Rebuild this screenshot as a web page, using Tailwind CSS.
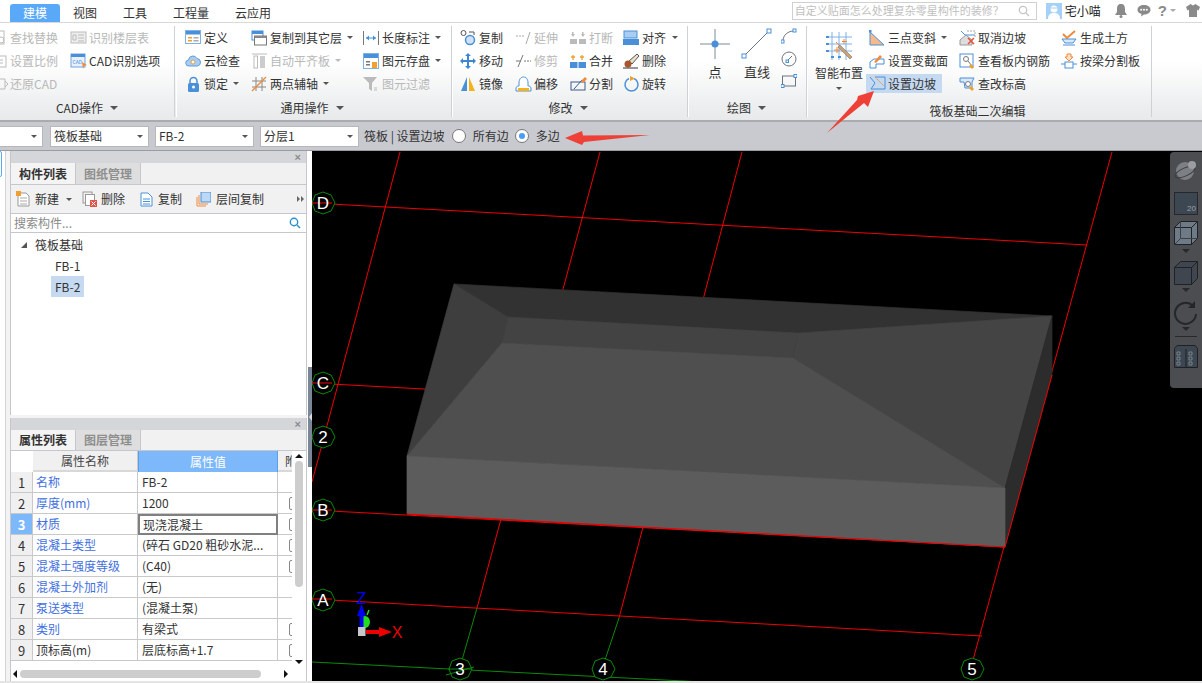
<!DOCTYPE html>
<html lang="zh">
<head>
  <meta charset="UTF-8" />
  <title>筏板基础</title>
  <script src="https://cdn.jsdelivr.net/npm/@tailwindcss/browser@4"></script>
</head>
<body class="bg-white">
<div class="relative w-[1202px] h-[683px] overflow-hidden flex flex-col bg-white text-[12px] leading-none text-[#333] [font-family:'Noto_Sans_CJK_SC','Liberation_Sans',sans-serif]">

  <!-- Tabs row -->
  <header class="h-[23px] flex items-end border-b border-[#d9d9d9] shrink-0">
    <div class="ml-[10px] w-[50px] h-[18px] rounded-t-[3px] bg-[#5aa9f8] text-white flex items-center justify-center">建模</div>
    <nav class="flex h-[18px] items-center">
      <span class="ml-[13px] w-[50px]">视图</span>
      <span class="w-[50px]">工具</span>
      <span class="w-[62px]">工程量</span>
      <span>云应用</span>
    </nav>
    <div class="ml-auto flex items-center h-[23px] pr-[2px]">
      <div class="w-[245px] h-[18px] border border-[#d0d0d0] flex items-center pl-[2px] pr-[6px] text-[11px] text-[#c0c0c0]">
        <span>自定义贴面怎么处理复杂零星构件的装修？</span>
        <svg class="ml-auto" width="12" height="12" viewBox="0 0 12 12" fill="none" stroke="#c4c4c4" stroke-width="1.3"><circle cx="5" cy="5" r="3.7"/><path d="M8 8l3 3"/></svg>
      </div>
      <svg class="ml-[9px]" width="16" height="16" viewBox="0 0 16 16"><rect width="16" height="16" fill="#a5d0f8"/><circle cx="8" cy="6" r="3.5" fill="#fff"/><path d="M2 16c0-5 3-6 6-6s6 1 6 6z" fill="#fff"/><path d="M4 5h8" stroke="#a5d0f8"/></svg>
      <span class="ml-[3px] w-[37px] text-[12px] text-[#222]">宅小喵</span>
      <svg class="ml-[12px]" width="14" height="15" viewBox="0 0 14 15" fill="#8a8a8a"><path d="M7 1c3 0 4 2 4 5v3l2 3H1l2-3V6c0-3 1-5 4-5z"/><circle cx="7" cy="13.5" r="1.5"/></svg>
      <svg class="ml-[9px]" width="14" height="13" viewBox="0 0 14 13"><path d="M7 1c3.6 0 6.5 2 6.500 4.700S10.600 10.500 7 10.500l-3 2 .5-2.500C2 9.300.5 7.700.5 5.700.5 3 3.400 1 7 1z" fill="#8a8a8a"/><g fill="#fff"><circle cx="4.200" cy="5.700" r="1"/><circle cx="7" cy="5.700" r="1"/><circle cx="9.800" cy="5.700" r="1"/></g></svg>
      <span class="ml-[7px] text-[15px] font-bold text-[#8a8a8a] [font-family:'Liberation_Sans',sans-serif]">?</span>
      <span class="ml-[3px] w-0 h-0 border-x-[3px] border-x-transparent border-t-[3px] border-t-[#aaa]"></span>
      <svg class="ml-[10px]" width="14" height="13" viewBox="0 0 14 13" fill="#8a8a8a"><path d="M4.500 0l2.500 1.500L9.500 0 14 3l-1.500 3.500-1.500-.7V13H3V5.800l-1.500.7L0 3z"/></svg>
    </div>
  </header>

  <!-- Ribbon -->
  <section class="h-[99px] flex shrink-0 bg-gradient-to-b from-white from-40% to-[#e7e9ea] border-b-2 border-[#a9abae]">

    <!-- CAD -->
    <div class="w-[175px] flex flex-col border-r border-[#cfd2d4] overflow-hidden text-[#b8b8b8] my-[3px] shrink-0">
      <div class="flex h-[75px]">
        <div class="w-[70px] shrink-0 -ml-[9px] mr-[9px]">
          <div class="flex items-center h-[23px] w-[80px]"><svg class="w-[19px] shrink-0" height="16" viewBox="0 0 19 16" fill="none" stroke="#bbb"><rect x="3" y="1" width="10" height="13"/><circle cx="10" cy="10" r="3"/></svg>查找替换</div>
          <div class="flex items-center h-[23px] w-[80px]"><svg class="w-[19px] shrink-0" height="16" viewBox="0 0 19 16" fill="none" stroke="#bbb"><rect x="3" y="3" width="12" height="11"/><path d="M6 7h6M6 10h6"/></svg>设置比例</div>
          <div class="flex items-center h-[23px] w-[80px]"><svg class="w-[19px] shrink-0" height="16" viewBox="0 0 19 16" fill="none" stroke="#bbb"><path d="M3 3h11v10H3M14 5l3 3-3 3"/></svg>还原CAD</div>
        </div>
        <div>
          <div class="flex items-center h-[23px]"><svg class="w-[19px] shrink-0" height="14" viewBox="0 0 19 14" fill="none" stroke="#bbb"><rect x="1" y="1" width="15" height="11" fill="#eee"/><path d="M3 4h3v5H3zM8 4h6M8 7h6M8 10h6"/></svg>识别楼层表</div>
          <div class="flex items-center h-[23px] text-[#333]"><svg class="w-[19px] shrink-0" height="16" viewBox="0 0 19 16"><rect x="1" y="1" width="14" height="13" fill="#e8f1fb" stroke="#6ea3dc"/><rect x="1" y="1" width="14" height="3" fill="#4a90d9"/><text x="2.500" y="11" font-size="5" fill="#4a90d9">CAD</text><path d="M12 9l5 3-3 1-1 3z" fill="#ef8a3a"/></svg>CAD识别选项</div>
        </div>
      </div>
      <div class="flex-1 flex items-center justify-center text-[#333] pb-[2px]">CAD操作<span class="ml-[7px] w-0 h-0 border-x-[4px] border-x-transparent border-t-[4px] border-t-[#555]"></span></div>
    </div>

    <!-- 通用操作 -->
    <div class="w-[276px] flex flex-col border-r border-[#cfd2d4] my-[3px] ml-[1px] border-l border-l-white shrink-0">
      <div class="flex h-[75px] pl-[8px]">
        <div class="w-[66px] shrink-0">
          <div class="flex items-center h-[23px]"><svg class="w-[19px] shrink-0" height="15" viewBox="0 0 19 15"><rect x=".5" y=".5" width="15" height="13" fill="#fff" stroke="#7fb0e5"/><rect x="1" y="1" width="14" height="3.500" fill="#4a90d9"/><path d="M3 7h4v1.500H3zM3 10h4v1.500H3z" fill="#f0a030"/><path d="M8.500 7h5v1.500h-5zM8.500 10h5v1.500h-5z" fill="#aaa"/></svg>定义</div>
          <div class="flex items-center h-[23px]"><svg class="w-[19px] shrink-0" height="14" viewBox="0 0 19 14"><path d="M4 12a3 3 0 0 1-.5-6A4.500 4.500 0 0 1 12 4.500 3.800 3.800 0 0 1 12.500 12z" fill="#a9cdf2" stroke="#5f9bd8"/><circle cx="8" cy="8" r="2" fill="#fff" stroke="#e89a45"/></svg>云检查</div>
          <div class="flex items-center h-[23px]"><svg class="w-[19px] shrink-0" height="16" viewBox="0 0 19 16"><path d="M5 7V5a3.500 3.500 0 0 1 7 0v2" fill="none" stroke="#4a90d9" stroke-width="1.500"/><rect x="3" y="7" width="11" height="9" rx="1.500" fill="#4a90d9"/><circle cx="8.500" cy="11" r="1.500" fill="#fff"/></svg>锁定<span class="ml-[5px] w-0 h-0 border-x-[3px] border-x-transparent border-t-[3px] border-t-[#555]"></span></div>
        </div>
        <div class="w-[112px] shrink-0">
          <div class="flex items-center h-[23px]"><svg class="w-[19px] shrink-0" height="16" viewBox="0 0 19 16"><rect x="1" y="1" width="11" height="9" fill="#fff" stroke="#4a90d9"/><rect x="1" y="1" width="11" height="3" fill="#4a90d9"/><rect x="3.500" y="6" width="12" height="9" fill="#fff" stroke="#777"/><rect x="3.500" y="6" width="12" height="2" fill="#888"/></svg>复制到其它层<span class="ml-[5px] w-0 h-0 border-x-[3px] border-x-transparent border-t-[3px] border-t-[#555]"></span></div>
          <div class="flex items-center h-[23px] text-[#b8b8b8]"><svg class="w-[19px] shrink-0" height="16" viewBox="0 0 19 16"><path d="M1 1h15" stroke="#bbb"/><rect x="3" y="3" width="3.500" height="12" fill="none" stroke="#bbb"/><rect x="9" y="3" width="5" height="12" fill="#ccc"/></svg>自动平齐板<span class="ml-[5px] w-0 h-0 border-x-[3px] border-x-transparent border-t-[3px] border-t-[#bbb]"></span></div>
          <div class="flex items-center h-[23px]"><svg class="w-[19px] shrink-0" height="16" viewBox="0 0 19 16" fill="none"><path d="M5 1v14M11 1v14M1 5h14M1 11h14" stroke="#888"/><path d="M1 15L15 1" stroke="#ef8a3a" stroke-width="1.300"/></svg>两点辅轴<span class="ml-[5px] w-0 h-0 border-x-[3px] border-x-transparent border-t-[3px] border-t-[#555]"></span></div>
        </div>
        <div>
          <div class="flex items-center h-[23px]"><svg class="w-[19px] shrink-0" height="14" viewBox="0 0 19 14" fill="none"><path d="M.5 0v14M15.500 0v14" stroke="#777"/><path d="M3 7h10" stroke="#4a90d9"/><path d="M3 7l3-2.500v5zM13 7l-3-2.500v5z" fill="#4a90d9"/></svg>长度标注<span class="ml-[5px] w-0 h-0 border-x-[3px] border-x-transparent border-t-[3px] border-t-[#555]"></span></div>
          <div class="flex items-center h-[23px]"><svg class="w-[19px] shrink-0" height="16" viewBox="0 0 19 16"><rect x=".5" y=".5" width="15" height="15" fill="#fff" stroke="#7fb0e5"/><rect x="1" y="1" width="14" height="4" fill="#4a90d9"/><rect x="3" y="8" width="4" height="1.500" fill="#777"/><rect x="3" y="11" width="4" height="1.500" fill="#777"/><rect x="9" y="9" width="5" height="6" fill="#f0a030"/></svg>图元存盘<span class="ml-[5px] w-0 h-0 border-x-[3px] border-x-transparent border-t-[3px] border-t-[#555]"></span></div>
          <div class="flex items-center h-[23px] text-[#b8b8b8]"><svg class="w-[19px] shrink-0" height="16" viewBox="0 0 19 16"><path d="M0 1h14L9 7v8L6 13V7z" fill="#bbb"/><path d="M11 12h3M11 14h3" stroke="#bbb"/></svg>图元过滤</div>
        </div>
      </div>
      <div class="flex-1 flex items-center justify-center pb-[2px] pr-[4px]">通用操作<span class="ml-[7px] w-0 h-0 border-x-[4px] border-x-transparent border-t-[4px] border-t-[#555]"></span></div>
    </div>

    <!-- 修改 -->
    <div class="w-[236px] flex flex-col border-r border-[#cfd2d4] my-[3px] border-l border-l-white shrink-0">
      <div class="flex h-[75px] pl-[7px]">
        <div class="w-[55px] shrink-0">
          <div class="flex items-center h-[23px]"><svg class="w-[19px] shrink-0" height="16" viewBox="0 0 19 16" fill="none"><circle cx="3.500" cy="3" r="2.500" stroke="#555"/><circle cx="10" cy="10" r="4.500" fill="#cfe2f6" stroke="#4a90d9" stroke-width="1.500"/><path d="M9 2h5v3" stroke="#555"/></svg>复制</div>
          <div class="flex items-center h-[23px]"><svg class="w-[19px] shrink-0" height="16" viewBox="0 0 19 16" fill="#3f86d2"><path d="M8 0l3 3H9v4h4V5l3 3-3 3V9H9v4h2l-3 3-3-3h2V9H3v2L0 8l3-3v2h4V3H5z"/></svg>移动</div>
          <div class="flex items-center h-[23px]"><svg class="w-[19px] shrink-0" height="16" viewBox="0 0 19 16"><path d="M7 1v14H1z" fill="#4a90d9"/><path d="M9 1v14h6z" fill="#f5b21f"/></svg>镜像</div>
        </div>
        <div class="w-[55px] shrink-0">
          <div class="flex items-center h-[23px] text-[#b8b8b8]"><svg class="w-[19px] shrink-0" height="16" viewBox="0 0 19 16" fill="none" stroke="#aaa"><path d="M1 6h8" stroke-dasharray="2 1"/><path d="M11 14L15 2"/></svg>延伸</div>
          <div class="flex items-center h-[23px] text-[#b8b8b8]"><svg class="w-[19px] shrink-0" height="16" viewBox="0 0 19 16" fill="none" stroke="#777"><path d="M1 8h5"/><path d="M3 14L8 2"/><path d="M9 8h7" stroke-dasharray="2 1"/></svg>修剪</div>
          <div class="flex items-center h-[23px]"><svg class="w-[19px] shrink-0" height="16" viewBox="0 0 19 16"><path d="M1 15v-2C1 10 3 10 4 10V7C4 3 6 1 8.500 1S13 3 13 7v3c1 0 3 0 3 3v2z" fill="#fff" stroke="#4a90d9"/><path d="M3 12h11v3H3z" fill="#f5b21f"/></svg>偏移</div>
        </div>
        <div class="w-[53px] shrink-0">
          <div class="flex items-center h-[23px] text-[#b8b8b8]"><svg class="w-[19px] shrink-0" height="16" viewBox="0 0 19 16" fill="#bbb"><rect x="0" y="9" width="7" height="5"/><rect x="9" y="9" width="7" height="5"/><path d="M2 2h1.500v2H5L3 7 1 4h1zM12 2h1.500v2H15l-2 3-2-3h1z"/></svg>打断</div>
          <div class="flex items-center h-[23px]"><svg class="w-[19px] shrink-0" height="16" viewBox="0 0 19 16"><rect x="0" y="9" width="16" height="6" fill="#4a90d9"/><path d="M8 9v6" stroke="#fff"/><path d="M3 2v5M1 4h4M12 2v5M10 4h4" stroke="#f0a030" stroke-width="1.300"/></svg>合并</div>
          <div class="flex items-center h-[23px]"><svg class="w-[19px] shrink-0" height="16" viewBox="0 0 19 16" fill="none"><rect x="1" y="6" width="14" height="8" stroke="#3c5a8a"/><path d="M4 13l8-9" stroke="#3c5a8a"/><path d="M11 5l4-4 2 2-4 4z" fill="#ef8a3a"/></svg>分割</div>
        </div>
        <div>
          <div class="flex items-center h-[23px]"><svg class="w-[19px] shrink-0" height="16" viewBox="0 0 19 16"><rect x="1" y="1" width="13" height="7" fill="#a9cdf2" stroke="#4a90d9"/><rect x="0" y="9" width="16" height="6" fill="#4a90d9"/></svg>对齐<span class="ml-[6px] w-0 h-0 border-x-[3px] border-x-transparent border-t-[3px] border-t-[#555]"></span></div>
          <div class="flex items-center h-[23px]"><svg class="w-[19px] shrink-0" height="16" viewBox="0 0 19 16"><path d="M6 8L14 1l2 2-7 8z" fill="#e5e0c8" stroke="#555"/><circle cx="5" cy="11" r="3.500" fill="#a9562d"/><path d="M0 15h15" stroke="#333"/></svg>删除</div>
          <div class="flex items-center h-[23px]"><svg class="w-[19px] shrink-0" height="16" viewBox="0 0 19 16" fill="none"><path d="M6 2.500a6.500 6.500 0 1 0 5 0" stroke="#4a90d9" stroke-width="1.500"/><path d="M7 0l5 2.500L7 5z" fill="#f0a030"/></svg>旋转</div>
        </div>
      </div>
      <div class="flex-1 flex items-center justify-center pb-[2px] pr-[4px]">修改<span class="ml-[7px] w-0 h-0 border-x-[4px] border-x-transparent border-t-[4px] border-t-[#555]"></span></div>
    </div>

    <!-- 绘图 -->
    <div class="w-[119px] flex flex-col border-r border-[#cfd2d4] my-[3px] border-l border-l-white shrink-0">
      <div class="flex h-[75px] pl-[5px]">
        <div class="w-[42px] flex flex-col items-center">
          <svg class="mt-[3px]" width="30" height="30" viewBox="0 0 30 30" fill="none"><path d="M15 0v30M0 15h30" stroke="#7d8a96"/><circle cx="15" cy="15" r="3.500" fill="#4a90d9"/></svg>
          <span class="mt-[6px] text-[13px]">点</span>
        </div>
        <div class="w-[42px] flex flex-col items-center">
          <svg class="mt-[2px]" width="32" height="31" viewBox="0 0 32 31" fill="none"><path d="M3 28L28 3" stroke="#6b7580"/><rect x="1" y="26" width="4" height="4" fill="#fff" stroke="#4a90d9"/><rect x="26" y="1" width="4" height="4" fill="#fff" stroke="#4a90d9"/></svg>
          <span class="mt-[6px] text-[13px]">直线</span>
        </div>
        <div class="pl-[3px] pt-[2px] flex flex-col gap-[7px]">
          <svg width="16" height="16" viewBox="0 0 16 16" fill="none"><path d="M2 13C2 7 7 3 13 3" stroke="#6b7580"/><rect x="0" y="12" width="3" height="3" fill="#fff" stroke="#4a90d9"/><rect x="12" y="1" width="3" height="3" fill="#fff" stroke="#4a90d9"/></svg>
          <svg width="16" height="16" viewBox="0 0 16 16" fill="none"><circle cx="8" cy="8" r="7" stroke="#6b7580"/><path d="M6 10l5-5" stroke="#6b7580"/><rect x="5" y="9" width="2.500" height="2.500" fill="#fff" stroke="#4a90d9"/></svg>
          <svg width="16" height="14" viewBox="0 0 16 14" fill="none"><rect x="1.500" y="2" width="13" height="10" stroke="#6b7580"/><rect x="0" y="10.500" width="3" height="3" fill="#fff" stroke="#4a90d9"/><rect x="13" y=".5" width="3" height="3" fill="#fff" stroke="#4a90d9"/></svg>
        </div>
      </div>
      <div class="flex-1 flex items-center justify-center pb-[2px] pr-[2px]">绘图<span class="ml-[7px] w-0 h-0 border-x-[4px] border-x-transparent border-t-[4px] border-t-[#555]"></span></div>
    </div>

    <!-- 筏板基础二次编辑 -->
    <div class="w-[345px] flex flex-col border-r border-[#cfd2d4] my-[3px] border-l border-l-white shrink-0">
      <div class="flex h-[75px] pl-[5px]">
        <div class="w-[52px] shrink-0 flex flex-col items-center">
          <svg class="mt-[5px]" width="28" height="30" viewBox="0 0 28 30" fill="none"><path d="M7 1v28M14 1v28M21 1v28M1 6h26M1 13h26M1 20h26" stroke="#7eb0e8"/><path d="M1 6h3M1 13h3M1 20h3M6 26h3M13 26h3" stroke="#4a90d9" stroke-width="2"/><path d="M11 11l4 4M9 19h6M12 16v6M19 8v5M17 10.500h5" stroke="#ef8a3a"/><path d="M15 14l12 12-2 2L13 16z" fill="#c9a27a" stroke="#7a6048" stroke-width=".5"/></svg>
          <span class="mt-[6px] whitespace-nowrap">智能布置</span>
          <span class="mt-[8px] w-0 h-0 border-x-[3px] border-x-transparent border-t-[3px] border-t-[#555]"></span>
        </div>
        <div class="w-[94px] shrink-0 pl-[1px]">
          <div class="flex items-center h-[23px] pl-[3px]"><svg class="w-[19px] shrink-0" height="16" viewBox="0 0 19 16"><path d="M1 2v13h14z" fill="#f6b98c" stroke="#4a90d9"/><rect x="0" y="0" width="2.500" height="2.500" fill="#4a90d9"/></svg>三点变斜<span class="ml-[5px] w-0 h-0 border-x-[3px] border-x-transparent border-t-[3px] border-t-[#555]"></span></div>
          <div class="flex items-center h-[23px] pl-[3px]"><svg class="w-[19px] shrink-0" height="16" viewBox="0 0 19 16" fill="none"><path d="M1 15V9l4-3h10v5H7v4z" stroke="#4a90d9"/><path d="M5 9l6-7 2 2-6 6z" fill="#ef8a3a"/></svg>设置变截面</div>
          <div class="flex items-center h-[19px] mt-[2px] w-[76px] bg-[#c5d9f1] pl-[3px]"><svg class="w-[19px] shrink-0" height="16" viewBox="0 0 19 16" fill="none"><path d="M1 1l5 6-4 6h14V1H6" stroke="#4a90d9"/><path d="M6 1l9 9" stroke="#ef8a3a" stroke-dasharray="2 1"/></svg>设置边坡</div>
        </div>
        <div class="w-[102px] shrink-0">
          <div class="flex items-center h-[23px]"><svg class="w-[19px] shrink-0" height="16" viewBox="0 0 19 16" fill="none"><path d="M2 1l4 4h10" stroke="#4a90d9"/><path d="M8 1h8v6" stroke="#aaa" stroke-dasharray="2 1"/><path d="M1 10l6-5 6 5v5H1z" fill="#ddd" stroke="#999"/><path d="M9 8l6 6M15 8l-6 6" stroke="#e5533d" stroke-width="1.500"/></svg>取消边坡</div>
          <div class="flex items-center h-[23px]"><svg class="w-[19px] shrink-0" height="16" viewBox="0 0 19 16" fill="none"><rect x="1" y="1" width="13" height="13" stroke="#4a90d9"/><circle cx="7" cy="6" r="2.500" stroke="#777"/><path d="M9 8l4 5" stroke="#777"/><path d="M12 11l3 3-2 2-3-3z" fill="#f0a030"/></svg>查看板内钢筋</div>
          <div class="flex items-center h-[23px]"><svg class="w-[19px] shrink-0" height="16" viewBox="0 0 19 16" fill="none"><path d="M1 2h14l-2 4v6H6L5 6H1z" fill="#dbe8f6" stroke="#4a90d9"/><circle cx="9" cy="8" r="2.500" fill="#fff" stroke="#777"/><path d="M12 10l3 3-2 2-3-3z" fill="#f0a030"/></svg>查改标高</div>
        </div>
        <div class="shrink-0">
          <div class="flex items-center h-[23px]"><svg class="w-[19px] shrink-0" height="16" viewBox="0 0 19 16" fill="none"><path d="M2 4l4 4 8-7" stroke="#ef8a3a" stroke-width="2"/><path d="M1 9h14l-3 4H4z" stroke="#4a90d9" fill="#dbe8f6"/><path d="M2 15h12" stroke="#4a90d9"/></svg>生成土方</div>
          <div class="flex items-center h-[23px]"><svg class="w-[19px] shrink-0" height="16" viewBox="0 0 19 16" fill="none"><path d="M6 1h4v3h2L8 8 4 4h2z" fill="#f9e0c8" stroke="#ef8a3a"/><path d="M0 11h4M12 11h4" stroke="#4a90d9"/><rect x="4" y="9" width="8" height="6" stroke="#4a90d9"/></svg>按梁分割板</div>
        </div>
      </div>
      <div class="flex-1 flex items-center justify-center pt-[4px] pr-[4px]">筏板基础二次编辑</div>
    </div>
  </section>

  <!-- Options bar -->
  <section class="h-[29px] shrink-0 flex items-center bg-[#c8cacf] border-b border-[#9a9ca0]">
    <div class="-ml-[6px] w-[49px] h-[21px] bg-white border border-[#b5b7bb] flex items-center justify-end pr-[5px]"><span class="w-0 h-0 border-x-[3px] border-x-transparent border-t-[3px] border-t-[#555]"></span></div>
    <div class="ml-[7px] w-[99px] h-[21px] bg-white border border-[#b5b7bb] flex items-center pl-[3px] pr-[5px]">筏板基础<span class="ml-auto w-0 h-0 border-x-[3px] border-x-transparent border-t-[3px] border-t-[#555]"></span></div>
    <div class="ml-[6px] w-[99px] h-[21px] bg-white border border-[#b5b7bb] flex items-center pl-[3px] pr-[5px]">FB-2<span class="ml-auto w-0 h-0 border-x-[3px] border-x-transparent border-t-[3px] border-t-[#555]"></span></div>
    <div class="ml-[6px] w-[99px] h-[21px] bg-white border border-[#b5b7bb] flex items-center pl-[3px] pr-[5px]">分层1<span class="ml-auto w-0 h-0 border-x-[3px] border-x-transparent border-t-[3px] border-t-[#555]"></span></div>
    <span class="ml-[5px]">筏板 | 设置边坡</span>
    <span class="ml-[7px] w-[14px] h-[14px] rounded-full bg-white border border-[#777]"></span>
    <span class="ml-[7px]">所有边</span>
    <span class="ml-[6px] w-[14px] h-[14px] rounded-full bg-white border border-[#777] flex items-center justify-center"><span class="w-[6px] h-[6px] rounded-full bg-[#4a9df5]"></span></span>
    <span class="ml-[7px]">多边</span>
  </section>

  <!-- Main -->
  <main class="flex-1 flex min-h-0 border-b-2 border-[#e4e4e4]">
    <!-- Left strip + panels -->
    <div class="w-[6px] shrink-0 bg-white border-r border-[#d4d4d4] relative"><div class="absolute -left-[4px] top-0 w-[6px] h-[26px] rounded-[2px] border border-[#5aa9f8]"></div></div>
    <div class="w-[301px] pl-[4px] shrink-0 flex flex-col bg-[#f3f3f3]">
      <!-- Component list -->
      <div class="h-[264px] flex flex-col border-x border-[#c5c7ca] bg-white">
        <div class="h-[12px] bg-[#d4d6da] flex items-center justify-end pr-[5px] text-[#8b8b8b] text-[11px] [font-family:'Liberation_Sans',sans-serif] font-bold">×</div>
        <div class="h-[22px] flex bg-[#f1f1f1] border-b border-[#c5c7ca]">
          <div class="w-[65px] flex items-center justify-center font-bold border-r border-[#c5c7ca] bg-[#f4f4f4]">构件列表</div>
          <div class="w-[65px] flex items-center justify-center text-[#8e8e8e] font-bold bg-[#dedede] border-r border-[#c5c7ca]">图纸管理</div>
        </div>
        <div class="h-[29px] flex items-center bg-[#f1f1f1] border-b border-[#c5c7ca] pl-[5px]">
          <svg width="15" height="16" viewBox="0 0 15 16" fill="none"><path d="M2 2h8l3 3v10H2z" stroke="#999" fill="#fff"/><path d="M4 7h7M4 10h7M4 13h7" stroke="#aaa"/><rect x="0" y="0" width="5" height="5" fill="#f0a030"/></svg>
          <span class="ml-[4px]">新建</span>
          <span class="ml-[7px] w-0 h-0 border-x-[3px] border-x-transparent border-t-[3px] border-t-[#555]"></span>
          <svg class="ml-[10px]" width="16" height="16" viewBox="0 0 16 16" fill="none"><rect x="1" y="1" width="9" height="11" stroke="#999"/><rect x="3.500" y="3.500" width="9" height="11" stroke="#999" fill="#fff"/><rect x="8" y="9" width="7" height="7" fill="#e0544a"/><path d="M9.500 10.500l4 4M13.500 10.500l-4 4" stroke="#fff"/></svg>
          <span class="ml-[3px]">删除</span>
          <svg class="ml-[15px]" width="13" height="15" viewBox="0 0 13 15" fill="none"><path d="M1 1h7l4 4v9H1z" stroke="#4a90d9" fill="#fff"/><path d="M3 7h7M3 9.500h7M3 12h7" stroke="#4a90d9"/></svg>
          <span class="ml-[5px]">复制</span>
          <svg class="ml-[14px]" width="15" height="15" viewBox="0 0 15 15" fill="none"><path d="M1 5v9h9" stroke="#ef8a3a"/><path d="M3 3v9h9" stroke="#ef8a3a"/><rect x="5" y="0" width="10" height="10" fill="#bcd8f5" stroke="#4a90d9"/></svg>
          <span class="ml-[5px]">层间复制</span>
          <span class="ml-auto mr-[2px] flex">
            <span class="w-0 h-0 border-y-[3px] border-y-transparent border-l-[3px] border-l-[#666]"></span>
            <span class="ml-[1px] w-0 h-0 border-y-[3px] border-y-transparent border-l-[3px] border-l-[#666]"></span>
          </span>
        </div>
        <div class="h-[19px] flex items-center pl-[3px] pr-[5px] border-b border-[#c5c7ca] text-[#8a8a8a]">搜索构件...
          <svg class="ml-auto" width="12" height="12" viewBox="0 0 12 12" fill="none" stroke="#2b8fc9" stroke-width="1.400"><circle cx="5" cy="5" r="3.700"/><path d="M8 8l3 3"/></svg>
        </div>
        <div class="flex-1">
          <div class="flex items-center h-[21px] pl-[10px] mt-[1px]"><span class="w-0 h-0 border-b-[6px] border-b-[#555] border-l-[6px] border-l-transparent"></span><span class="ml-[8px]">筏板基础</span></div>
          <div class="flex items-center h-[21px] pl-[40px]"><span class="px-[4px]">FB-1</span></div>
          <div class="flex items-center h-[21px] pl-[40px]"><span class="px-[4px] h-[21px] flex items-center bg-[#c5d9f1]">FB-2</span></div>
        </div>
      </div>
      <div class="h-[3px] bg-[#f3f3f3]"></div>
      <!-- Property list -->
      <div class="flex-1 min-h-0 flex flex-col border-x border-[#c5c7ca] bg-white relative">
        <div class="h-[12px] bg-[#d4d6da] flex items-center justify-end pr-[5px] text-[#8b8b8b] text-[11px] [font-family:'Liberation_Sans',sans-serif] font-bold shrink-0">×</div>
        <div class="h-[21px] flex bg-[#f1f1f1] border-b border-[#c5c7ca] shrink-0">
          <div class="w-[65px] flex items-center justify-center font-bold border-r border-[#c5c7ca] bg-[#f4f4f4]">属性列表</div>
          <div class="w-[65px] flex items-center justify-center text-[#8e8e8e] font-bold bg-[#dedede] border-r border-[#c5c7ca]">图层管理</div>
        </div>
        <div class="flex-1 min-h-0 overflow-hidden">
          <div class="grid grid-cols-[22px_105px_140px_15px] auto-rows-[21px] w-[282px]">
            <div class="bg-white"></div>
            <div class="bg-[#f0f0f0] border-r border-b-2 border-[#c9c9c9] border-b-[#d8d8d8] flex items-center justify-center text-[#444]">属性名称</div>
            <div class="bg-[#7cb8fa] border-x border-[#5a9fe8] text-white flex items-center justify-center">属性值</div>
            <div class="bg-[#f0f0f0] border-b-2 border-[#d8d8d8] flex items-center overflow-hidden pl-[7px] text-[#444]"><span class="shrink-0">附</span></div>

            <div class="bg-[#f0f0f0] border-b border-r border-[#c9c9c9] flex items-center justify-center text-[13px]">1</div>
            <div class="border-b border-r border-[#c9c9c9] flex items-center pl-[3px] text-[#3f6fe0]">名称</div>
            <div class="border-b border-r border-[#c9c9c9] flex items-center pl-[4px]">FB-2</div>
            <div class="border-b border-[#c9c9c9]"></div>

            <div class="bg-[#f0f0f0] border-b border-r border-[#c9c9c9] flex items-center justify-center text-[13px]">2</div>
            <div class="border-b border-r border-[#c9c9c9] flex items-center pl-[3px] text-[#3f6fe0]">厚度(mm)</div>
            <div class="border-b border-r border-[#c9c9c9] flex items-center pl-[4px]">1200</div>
            <div class="border-b border-[#c9c9c9] flex items-center justify-end overflow-hidden"><span class="-mr-[8px] w-[12px] h-[13px] rounded-[2px] border border-[#888]"></span></div>

            <div class="bg-[#7cb8fa] text-white font-bold border-b border-r border-[#c9c9c9] flex items-center justify-center text-[13px]">3</div>
            <div class="border-b border-r border-[#c9c9c9] flex items-center pl-[3px] text-[#3f6fe0]">材质</div>
            <div class="border-2 border-[#808080] flex items-center pl-[3px]">现浇混凝土</div>
            <div class="border-b border-[#c9c9c9] flex items-center justify-end overflow-hidden"><span class="-mr-[8px] w-[12px] h-[13px] rounded-[2px] border border-[#888]"></span></div>

            <div class="bg-[#f0f0f0] border-b border-r border-[#c9c9c9] flex items-center justify-center text-[13px]">4</div>
            <div class="border-b border-r border-[#c9c9c9] flex items-center pl-[3px] text-[#3f6fe0]">混凝土类型</div>
            <div class="border-b border-r border-[#c9c9c9] flex items-center pl-[4px] whitespace-nowrap overflow-hidden">(碎石 GD20 粗砂水泥...</div>
            <div class="border-b border-[#c9c9c9] flex items-center justify-end overflow-hidden"><span class="-mr-[8px] w-[12px] h-[13px] rounded-[2px] border border-[#888]"></span></div>

            <div class="bg-[#f0f0f0] border-b border-r border-[#c9c9c9] flex items-center justify-center text-[13px]">5</div>
            <div class="border-b border-r border-[#c9c9c9] flex items-center pl-[3px] text-[#3f6fe0]">混凝土强度等级</div>
            <div class="border-b border-r border-[#c9c9c9] flex items-center pl-[4px]">(C40)</div>
            <div class="border-b border-[#c9c9c9] flex items-center justify-end overflow-hidden"><span class="-mr-[8px] w-[12px] h-[13px] rounded-[2px] border border-[#888]"></span></div>

            <div class="bg-[#f0f0f0] border-b border-r border-[#c9c9c9] flex items-center justify-center text-[13px]">6</div>
            <div class="border-b border-r border-[#c9c9c9] flex items-center pl-[3px] text-[#3f6fe0]">混凝土外加剂</div>
            <div class="border-b border-r border-[#c9c9c9] flex items-center pl-[4px]">(无)</div>
            <div class="border-b border-[#c9c9c9]"></div>

            <div class="bg-[#f0f0f0] border-b border-r border-[#c9c9c9] flex items-center justify-center text-[13px]">7</div>
            <div class="border-b border-r border-[#c9c9c9] flex items-center pl-[3px] text-[#3f6fe0]">泵送类型</div>
            <div class="border-b border-r border-[#c9c9c9] flex items-center pl-[4px]">(混凝土泵)</div>
            <div class="border-b border-[#c9c9c9]"></div>

            <div class="bg-[#f0f0f0] border-b border-r border-[#c9c9c9] flex items-center justify-center text-[13px]">8</div>
            <div class="border-b border-r border-[#c9c9c9] flex items-center pl-[3px] text-[#3f6fe0]">类别</div>
            <div class="border-b border-r border-[#c9c9c9] flex items-center pl-[4px]">有梁式</div>
            <div class="border-b border-[#c9c9c9] flex items-center justify-end overflow-hidden"><span class="-mr-[8px] w-[12px] h-[13px] rounded-[2px] border border-[#888]"></span></div>

            <div class="bg-[#f0f0f0] border-b border-r border-[#c9c9c9] flex items-center justify-center text-[13px]">9</div>
            <div class="border-b border-r border-[#c9c9c9] flex items-center pl-[3px]">顶标高(m)</div>
            <div class="border-b border-r border-[#c9c9c9] flex items-center pl-[4px]">层底标高+1.7</div>
            <div class="border-b border-[#c9c9c9] flex items-center justify-end overflow-hidden"><span class="-mr-[8px] w-[12px] h-[13px] rounded-[2px] border border-[#888]"></span></div>
          </div>
        </div>
        <!-- Vertical scrollbar -->
        <div class="absolute right-0 top-[33px] bottom-[14px] w-[14px] bg-white flex flex-col items-center">
          <span class="mt-[3px] w-0 h-0 border-x-[4px] border-x-transparent border-b-[4px] border-b-[#111]"></span>
          <span class="mt-[3px] w-[8px] h-[126px] rounded-[4px] bg-[#cdcdcd]"></span>
          <span class="mt-auto mb-[3px] w-0 h-0 border-x-[4px] border-x-transparent border-t-[4px] border-t-[#111]"></span>
        </div>
        <!-- Horizontal scrollbar -->
        <div class="h-[14px] shrink-0 bg-white flex items-center pl-[2px] relative">
          <span class="w-0 h-0 border-y-[4px] border-y-transparent border-r-[4px] border-r-[#111]"></span>
          <span class="ml-[3px] w-[241px] h-[8px] rounded-[4px] bg-[#cdcdcd]"></span>
          <span class="ml-[23px] w-0 h-0 border-y-[4px] border-y-transparent border-l-[4px] border-l-[#111]"></span>
        </div>
      </div>
    </div>
    <!-- Splitter -->
    <div class="w-[4px] ml-[1px] shrink-0 bg-white flex items-start">
      <div class="mt-[216px] w-[4px] h-[100px] bg-[#7a8796] flex items-center justify-center"><span class="w-0 h-0 border-y-[4px] border-y-transparent border-r-[3px] border-r-[#d8dde2]"></span></div>
    </div>

    <!-- 3D canvas -->
    <div class="flex-1 relative bg-black overflow-hidden">
      <svg class="block" width="890" height="530" viewBox="312 151 890 530" fill="none">
        <!-- grid -->
        <g stroke="#f00000" stroke-width="1">
          <path d="M312 203L1087 245"/>
          <path d="M312 383L1000 420"/>
          <path d="M312 510L1005 547"/>
          <path d="M312 599L982 636"/>
          <path d="M400 152L312 482"/>
          <path d="M600 152L477 608"/>
          <path d="M742 152L619 618"/>
          <path d="M1112 152L973 660"/>
        </g>
        <g stroke="#0a8a0a" stroke-width="1">
          <path d="M477 608L462 660"/>
          <path d="M619 618L605 660"/>
          <path d="M312 662L860 690"/>
        </g>
        <!-- slab -->
        <polygon points="454,284 1052,316 798,333 508,317" fill="#323232" stroke="#323232" stroke-width=".7"/>
        <polygon points="454,284 508,317 502,343 407,456" fill="#3e3e3e" stroke="#3e3e3e" stroke-width=".7"/>
        <polygon points="508,317 798,333 793,358 502,343" fill="#434343" stroke="#434343" stroke-width=".7"/>
        <polygon points="798,333 1052,316 1005,488 793,358" fill="#444444" stroke="#444444" stroke-width=".7"/>
        <polygon points="502,343 793,358 1005,488 407,456" fill="#4f4f4f" stroke="#4f4f4f" stroke-width=".7"/>
        <polygon points="1052,316 1052,375 1005,547 1005,488" fill="#2c2c2c" stroke="#2c2c2c" stroke-width=".7"/>
        <polygon points="407,456 1005,488 1005,547 407,514" fill="#5c5c5c" stroke="#5c5c5c" stroke-width=".7"/>
        <path d="M407 514L1005 547" stroke="#f00000"/>
        <path d="M1052 375L1005 547" stroke="#f00000"/>
        <!-- axis labels -->
        <g stroke="#0a8a0a" fill="#000" stroke-width="1">
          <polygon points="323,192 331,195 335,203 331,211 323,214 315,211 312,203 315,195"/>
          <polygon points="323,372 331,375 335,383 331,391 323,394 315,391 312,383 315,375"/>
          <polygon points="323,426 331,429 335,437 331,445 323,448 315,445 312,437 315,429"/>
          <polygon points="323,499 331,502 335,510 331,518 323,521 315,518 312,510 315,502"/>
          <polygon points="323,589 331,592 335,600 331,608 323,611 315,608 312,600 315,592"/>
          <polygon points="460,658 468,661 472,669 468,677 460,680 452,677 449,669 452,661"/>
          <polygon points="603,658 611,661 615,669 611,677 603,680 595,677 592,669 595,661"/>
          <polygon points="972,658 980,661 984,669 980,677 972,680 964,677 961,669 964,661"/>
        </g>
        <g stroke="#f00000"><path d="M312 203h20M312 383h20M312 510h20M312 599h20"/></g>
        <g stroke="#0a8a0a"><path d="M446 675L474 667M448 669h24"/></g>
        <g fill="#fff" font-size="17" text-anchor="middle" font-family="Liberation Sans, sans-serif">
          <text x="323" y="209">D</text>
          <text x="323" y="389">C</text>
          <text x="323" y="443">2</text>
          <text x="323" y="516">B</text>
          <text x="323" y="606">A</text>
          <text x="460" y="675">3</text>
          <text x="603" y="675">4</text>
          <text x="972" y="675">5</text>
        </g>
        <!-- axis gizmo -->
        <ellipse cx="365" cy="622" rx="5" ry="6" fill="#22dd22"/>
        <path d="M367 615l2-5" stroke="#22dd22" stroke-width="1.500"/>
        <rect x="358" y="627" width="7.500" height="9" fill="#c8c8c8"/>
        <path d="M361.500 627v-12" stroke="#0000ee" stroke-width="4"/>
        <polygon points="361.500,604 366,616 357,616" fill="#0000ee"/>
        <path d="M366 632h14" stroke="#ee0000" stroke-width="4"/>
        <polygon points="392,632 379,627 379,637" fill="#ee0000"/>
        <text x="361.500" y="604" fill="#0000ee" font-size="16" text-anchor="middle" font-family="Liberation Sans, sans-serif">Z</text>
        <text x="397" y="638" fill="#ee0000" font-size="16" text-anchor="middle" font-family="Liberation Sans, sans-serif">X</text>
      </svg>

      <!-- View toolbar -->
      <div class="absolute right-0 top-[1px] w-[32px] h-[236px] rounded-l-[4px] bg-[#4b4d50] flex flex-col items-center pt-[6px]">
        <svg width="24" height="24" viewBox="0 0 24 24"><ellipse cx="11" cy="13" rx="9" ry="9" fill="#7c7f83"/><ellipse cx="11" cy="14" rx="11" ry="4" transform="rotate(-25 11 14)" fill="none" stroke="#3b3d40"/><circle cx="18" cy="7" r="4" fill="#9a9da1"/></svg>
        <div class="mt-[10px] w-[24px] h-[23px] bg-[#3d4752] border border-[#26282b] text-[#9aa3ad] text-[8px] flex items-end justify-end pr-[1px] pb-[1px] [font-family:'Liberation_Sans',sans-serif]">20</div>
        <svg class="mt-[6px]" width="24" height="24" viewBox="0 0 24 24" fill="none" stroke="#1f2124"><path d="M.5 6.500L6.500 .5h17v17l-6 6H.5z" fill="#6e7a86"/><path d="M.5 6.500h17v17M17.500 6.500l6-6"/><path d="M6.500 .5v17h17M.5 23.500l6-6" stroke="#3c4046"/></svg>
        <span class="mt-[4px] w-0 h-0 border-x-[4px] border-x-transparent border-t-[4px] border-t-[#26282b]"></span>
        <svg class="mt-[8px]" width="24" height="24" viewBox="0 0 24 24" fill="none" stroke="#1f2124"><path d="M.5 6.500L6.500 .5h17v17l-6 6H.5z" fill="#3f4650"/><path d="M.5 6.500h17v17M17.500 6.500l6-6"/></svg>
        <span class="mt-[3px] w-0 h-0 border-x-[4px] border-x-transparent border-t-[4px] border-t-[#26282b]"></span>
        <svg class="mt-[9px]" width="24" height="24" viewBox="0 0 24 24" fill="none"><path d="M19 5a10.500 10.500 0 1 0 3 8" stroke="#24262a" stroke-width="2"/><path d="M21 0v7h-7z" fill="#24262a"/></svg>
        <span class="mt-[2px] w-0 h-0 border-x-[4px] border-x-transparent border-t-[4px] border-t-[#26282b]"></span>
        <div class="mt-[5px] w-[22px] h-[1px] bg-[#26282b]"></div>
        <svg class="mt-[8px]" width="24" height="23" viewBox="0 0 24 23" fill="#3d4752" stroke="#1f2124"><path d="M3 .5h18l2.500 3v19H.5v-19z"/><path d="M12 4v18" /><path d="M3 7h3v3H3zM3 12h3v3H3zM3 17h3v3H3zM15 7h3v3h-3zM15 12h3v3h-3zM15 17h3v3h-3z" fill="none" stroke="#8f98a2" stroke-width=".7"/></svg>
      </div>
    </div>
  </main>

  <!-- Red annotation arrows -->
  <svg class="absolute left-0 top-0 pointer-events-none" width="1202" height="160" viewBox="0 0 1202 160">
    <polygon points="565,138 582,131 583,135.500 650,135 584,142 582,145" fill="#ee4036"/>
    <polygon points="874,91 868,107 864,103 827,133 857,100 858,96" fill="#ee4036"/>
  </svg>
</div>
</body>
</html>
